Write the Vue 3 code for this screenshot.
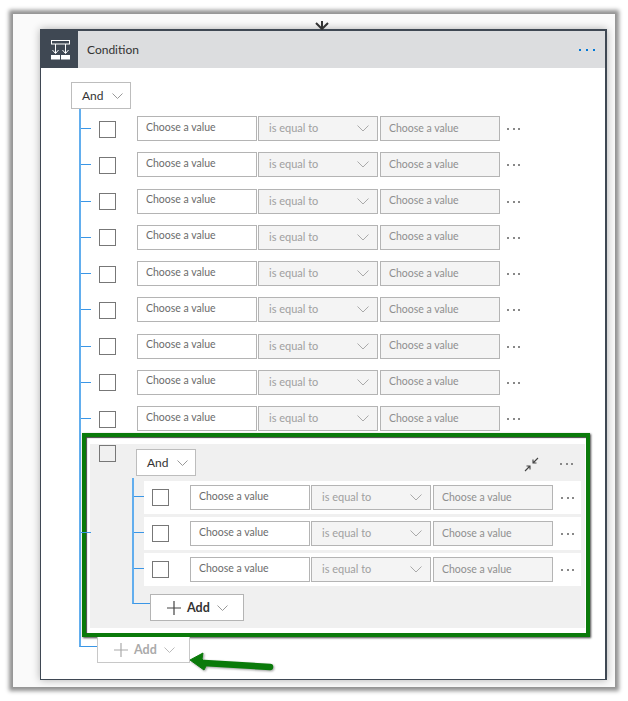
<script setup>
const outerRows = 9
const innerRows = 3
</script>

<template>
  <div class="page">
    <div class="frame">
      <svg class="connector" width="14" height="9" viewBox="0 0 14 9">
        <path d="M7 0V9M1 2L7 8L13 2" fill="none" stroke="#333" stroke-width="2" />
      </svg>
      <section class="card">
        <header class="card-head">
          <div class="head-icon">
            <svg width="38" height="38" viewBox="0 0 38 38">
              <rect x="11.5" y="10.5" width="18" height="3.5" fill="none" stroke="#fff" stroke-width="1" />
              <path d="M15.5 14V23M25.5 14V23M12.5 20L15.5 23.5L18.5 20M22.5 20L25.5 23.5L28.5 20" fill="none" stroke="#fff" stroke-width="1" />
              <rect x="11" y="25" width="9" height="4.5" fill="#fff" />
              <rect x="21" y="25" width="9" height="4.5" fill="#fff" />
            </svg>
          </div>
          <span class="head-title">Condition</span>
          <span class="dots blue"><i></i><i></i><i></i></span>
        </header>

        <div class="card-body">
          <button class="and">And
            <svg class="chev" width="11" height="6" viewBox="0 0 11 6"><path d="M.5.5L5.5 5.5L10.5.5" fill="none" stroke="#999" /></svg>
          </button>

          <div class="tree">
            <div v-for="n in outerRows" :key="n" class="row">
              <span class="check"></span>
              <div class="field first">Choose a value</div>
              <div class="field select">is equal to
                <svg width="12" height="7" viewBox="0 0 12 7"><path d="M.5.5L6 6L11.5.5" fill="none" stroke="#aaa" /></svg>
              </div>
              <div class="field value">Choose a value</div>
              <span class="dots"><i></i><i></i><i></i></span>
            </div>

            <div class="group">
              <div class="group-inner">
                <div class="group-head">
                  <span class="check"></span>
                  <button class="and nested-and">And
                    <svg class="chev" width="11" height="6" viewBox="0 0 11 6"><path d="M.5.5L5.5 5.5L10.5.5" fill="none" stroke="#999" /></svg>
                  </button>
                  <svg class="collapse" width="15" height="15" viewBox="0 0 15 15">
                    <path d="M14 1L9 6M9 2.5V6H12.5M1 14L6 9M2.5 9H6V12.5" fill="none" stroke="#444" stroke-width="1.1" />
                  </svg>
                  <span class="dots"><i></i><i></i><i></i></span>
                </div>

                <div class="subtree">
                  <div v-for="n in innerRows" :key="n" class="row subrow">
                    <span class="check"></span>
                    <div class="field first">Choose a value</div>
                    <div class="field select">is equal to
                      <svg width="12" height="7" viewBox="0 0 12 7"><path d="M.5.5L6 6L11.5.5" fill="none" stroke="#aaa" /></svg>
                    </div>
                    <div class="field value">Choose a value</div>
                    <span class="dots"><i></i><i></i><i></i></span>
                  </div>
                </div>

                <div class="add-wrap sub-add">
                  <button class="add">
                    <svg width="14" height="14" viewBox="0 0 14 14"><path d="M7 0V14M0 7H14" stroke="#444" stroke-width="1.2" /></svg>
                    <b>Add</b>
                    <svg class="chev-add" width="11" height="6" viewBox="0 0 11 6"><path d="M.5.5L5.5 5.5L10.5.5" fill="none" stroke="#999" /></svg>
                  </button>
                </div>
              </div>
            </div>
          </div>

          <div class="add-wrap outer-add">
            <button class="add off">
              <svg width="14" height="14" viewBox="0 0 14 14"><path d="M7 0V14M0 7H14" stroke="#aaa" stroke-width="1.2" /></svg>
              <b>Add</b>
              <svg class="chev-add" width="11" height="6" viewBox="0 0 11 6"><path d="M.5.5L5.5 5.5L10.5.5" fill="none" stroke="#bbb" /></svg>
            </button>
          </div>
        </div>
      </section>

      <svg class="arrow" width="90" height="24" viewBox="0 0 90 24">
        <path d="M15 12L81 16" fill="none" stroke="#0a7a0a" stroke-width="6.5" stroke-linecap="round" />
        <path d="M1 9L14 2L13 8L18 13L15 19Z" fill="#0a7a0a" stroke="#0a7a0a" stroke-linejoin="round" />
      </svg>
    </div>
  </div>
</template>

<style>
html, body { background: #fff; }
</style>

<style scoped>
* { box-sizing: border-box; }
.page {
  height: 701px;
  padding: 14px 0 0 13px;
}
.frame {
  position: relative;
  width: 602px;
  height: 673px;
  padding: 15px 0 0 27px;
  background: #fafafa;
  box-shadow: 0 0 4px 4px #939393;
  font-family: Lato, "Open Sans", sans-serif;
  font-size: 10.5px;
  color: #333;
}
.connector { position: absolute; left: 302px; top: 7px; }
.card {
  width: 567px;
  height: 651px;
  background: #fff;
  border: 1px solid #3f4853;
  border-top-width: 2px;
  border-right-width: 2px;
  box-shadow: 0 0 8px rgba(0, 0, 0, .3);
}
.card-head {
  display: flex;
  align-items: center;
  height: 37px;
  background: #dcdddf;
}
.head-icon { width: 38px; height: 38px; margin: -1px 0 0 -1px; background: #3f4853; }
.head-icon svg { display: block; }
.head-title { margin-left: 9px; font-size: 12px; color: #333; }
.dots { display: flex; gap: 3.5px; align-items: center; }
.dots i { display: block; width: 2px; height: 2px; background: #888; }
.dots.blue { margin-left: auto; margin-right: 10px; gap: 5px; }
.dots.blue i { background: #0078d7; }
.card-body { padding: 14px 0 0 30px; }
button {
  font: inherit;
  background: #fff;
  display: flex;
  align-items: center;
  margin: 0;
  padding: 0;
}
.and {
  width: 60px;
  height: 27px;
  border: 1px solid #bdbdbd;
  padding-left: 10px;
  font-size: 12px;
  color: #333;
}
.chev { margin-left: 8px; }
.tree {
  margin-left: 8px;
  padding-top: 7px;
  width: 511px;
  border-left: 2px solid #62aeee;
}
.row {
  position: relative;
  display: flex;
  align-items: center;
  height: 25px;
  margin-bottom: 11.25px;
}
.row::before {
  content: "";
  position: absolute;
  left: 0;
  top: 12px;
  width: 10px;
  height: 1px;
  background: #3a96e6;
}
.check {
  flex: none;
  width: 17px;
  height: 17px;
  margin: 1px 21px 0 18px;
  border: 1px solid #777;
  background: transparent;
}
.field {
  flex: none;
  display: flex;
  align-items: center;
  width: 120px;
  height: 25px;
  margin-right: 1px;
  padding: 0 0 2px 8px;
  border: 1px solid #b4b4b4;
  background: #f4f4f4;
  color: #a0a0a0;
}
.field.first { background: #fff; color: #6b6b6b; padding-bottom: 4px; }
.field.select { justify-content: space-between; padding-left: 10px; padding-right: 8px; font-size: 11px; }
.field.select svg { margin-top: 2px; }
.field.value { margin-left: 1px; color: #8f8f8f; }
.row .dots { margin: 1px 0 0 6px; }
.group {
  position: relative;
  width: 508px;
  height: 204px;
  margin: -9.25px 0 0 1px;
  padding: 7px 1px 5px 4px;
  border: 4px solid #0a7a0a;
  background: #fff;
  box-shadow: inset 1px 1px 1px #444, 1px 1px 2px #444;
}
.group::before {
  content: "";
  position: absolute;
  left: -5px;
  top: 95px;
  width: 10px;
  height: 1px;
  background: #3a96e6;
  z-index: 1;
}
.group-inner {
  height: 100%;
  background: #f0f0f0;
  padding-top: 1px;
}
.group-head {
  display: flex;
  align-items: flex-start;
  height: 33px;
}
.group-head .check { margin: 0 20px 0 9px; }
.nested-and { margin-top: 4px; }
.collapse { margin: 12px 0 0 328px; }
.group-head .dots { margin: 18px 0 0 21px; }
.subtree {
  margin-left: 42px;
  padding-top: 3px;
  border-left: 2px solid #62aeee;
}
.subrow {
  width: 437px;
  height: 33px;
  margin: 0 0 3px 10px;
  background: #fff;
}
.subrow:last-child { margin-bottom: 0; }
.subrow::before { left: -10px; top: 15px; }
.subrow .check { margin: 0 21px 0 8px; }
.subrow .dots { margin: 1px 0 0 7px; }
.add-wrap { position: relative; }
.add-wrap::before {
  content: "";
  position: absolute;
  left: 0;
  box-sizing: border-box;
  border-left: 2px solid #62aeee;
  border-bottom: 1px solid #3a96e6;
}
.sub-add { margin: 8px 0 0 42px; padding-left: 18px; }
.sub-add::before { top: -8px; width: 18px; height: 18px; }
.outer-add { margin-left: 8px; padding-left: 18px; }
.outer-add::before { top: 0; width: 18px; height: 10px; }
.add {
  width: 94px;
  height: 27px;
  border: 1px solid #b4b4b4;
  padding-left: 16px;
  gap: 6px;
  font-size: 12.5px;
  color: #333;
}
.add b { font-weight: 700; }
.chev-add { margin-left: 1px; }
.add.off { width: 93px; color: #aaa; border-color: #c8c8c8; border-top: none; height: 26px; }
.arrow { position: absolute; left: 176px; top: 637px; filter: drop-shadow(1px 1px 1px rgba(0,0,0,.4)); }
</style>
